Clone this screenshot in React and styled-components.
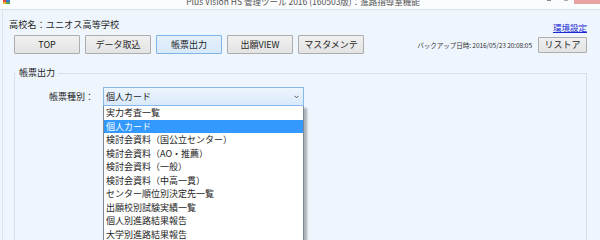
import styled, { createGlobalStyle } from 'styled-components';

const Global = createGlobalStyle`
  html, body {
    margin: 0;
    padding: 0;
    background: #eef5fd;
  }
  body {
    font-family: "Noto Sans CJK JP", "Noto Sans", sans-serif;
    font-size: 9px;
    color: #1e1e1e;
  }
`;

const Window = styled.div`
  width: 600px;
  height: 240px;
  overflow: hidden;
  background: #eef5fd;
  display: flex;
  flex-direction: column;
`;

const TitleBar = styled.div`
  height: 9px;
  flex-shrink: 0;
  background: #fbfcfd;
  border-bottom: 1px solid #d9e1ea;
  display: grid;
  grid-template-columns: 1fr auto 1fr;
  grid-template-rows: 9px;
  align-items: start;
  overflow: hidden;
`;

const AppIcon = styled.svg`
  margin-left: 3px;
`;

const Title = styled.div`
  font-size: 8.5px;
  line-height: 10px;
  color: #555;
  white-space: nowrap;
  margin-top: -4px;
  padding-left: 6px;
`;

const Controls = styled.div`
  justify-self: end;
  display: flex;
  align-items: flex-start;
  height: 9px;
  .min {
    width: 4px;
    height: 1px;
    background: #888;
    margin-right: 13px;
  }
  .max {
    width: 4px;
    height: 1px;
    background: #aaa;
    margin-right: 6px;
  }
  .close {
    width: 26px;
    height: 4px;
    background: #e7a3a3;
  }
`;

const Body = styled.div`
  flex: 1;
  display: flex;
  flex-direction: column;
  margin-left: 2px;
  border-left: 1px solid #dde5ec;
  padding: 0 13px 0 6px;
`;

const Header = styled.div`
  display: flex;
  justify-content: space-between;
  align-items: flex-end;
  height: 25px;
`;

const SchoolName = styled.div`
  line-height: 12px;
  margin-bottom: 5px;
  font-size: 9.2px;
`;

const SettingsLink = styled.a`
  line-height: 12px;
  margin-bottom: 2px;
  color: #1d2bd6;
  text-decoration: underline;
  font-size: 8.5px;
  cursor: pointer;
`;

const Toolbar = styled.div`
  display: flex;
  align-items: center;
  height: 19px;
  gap: 5px;
  padding-left: 5px;
`;

const Button = styled.button`
  width: ${p => p.$w || 66}px;
  height: ${p => p.$h || 19}px;
  padding: 0;
  font-family: inherit;
  font-size: 9px;
  color: #1e1e1e;
  border-radius: 1px;
  border: 1px solid ${p => (p.$active ? '#7eb4ea' : '#adadad')};
  background: ${p =>
    p.$active
      ? 'linear-gradient(#e4f0fc, #d8e9fb)'
      : 'linear-gradient(#f0f0f0, #e3e3e3)'};
`;

const Spacer = styled.div`
  flex: 1;
`;

const Backup = styled.div`
  font-size: 6.6px;
  color: #333;
  letter-spacing: -0.1px;
  margin-right: 1px;
`;

const Fieldset = styled.fieldset`
  margin: 13px 0 0 5px;
  padding: 0;
  border: 1px solid #d8dee5;
  height: 220px;
  min-width: 0;
`;

const Legend = styled.legend`
  margin-left: 1px;
  padding: 0 3px;
  line-height: 12px;
  font-size: 9px;
`;

const FormRow = styled.div`
  display: flex;
  align-items: center;
  padding: 8px 0 0 34px;
`;

const Label = styled.div`
  margin-right: 9px;
  font-size: 9px;
`;

const SelectWrap = styled.div`
  position: relative;
  width: 201px;
`;

const SelectBox = styled.div`
  box-sizing: border-box;
  height: 19px;
  border: 1px solid #86b9ea;
  background: linear-gradient(#edf5fd, #d9e9fa);
  display: flex;
  align-items: center;
  justify-content: space-between;
  padding: 0 4px 0 2px;
  font-size: 9px;
`;

const List = styled.ul`
  position: absolute;
  top: 100%;
  left: 0;
  width: 100%;
  box-sizing: border-box;
  margin: 0;
  padding: 0;
  list-style: none;
  background: #fff;
  border: 1px solid #7d8a96;
  border-top: none;
  box-shadow: 3px 2px 2px rgba(0, 0, 0, 0.28);
`;

const Item = styled.li`
  line-height: 13.5px;
  height: 13.5px;
  padding-left: 2px;
  font-size: 9px;
  white-space: nowrap;
  color: ${p => (p.$selected ? '#fff' : '#1e1e1e')};
  background: ${p => (p.$selected ? '#3399ff' : 'transparent')};
`;

const items = [
  '実力考査一覧',
  '個人カード',
  '検討会資料（国公立センター）',
  '検討会資料（AO・推薦）',
  '検討会資料（一般）',
  '検討会資料（中高一貫）',
  'センター順位別決定先一覧',
  '出願校別試験実績一覧',
  '個人別進路結果報告',
  '大学別進路結果報告',
];

const tabs = ['TOP', 'データ取込', '帳票出力', '出願VIEW', 'マスタメンテ'];

export default function App() {
  return (
    <>
      <Global />
      <Window>
        <TitleBar>
          <AppIcon width="7" height="4" viewBox="0 0 7 4">
            <rect x="0" y="0" width="3" height="2" fill="#e0443a" />
            <rect x="3" y="0" width="4" height="2" fill="#3b7bd8" />
            <rect x="0" y="2" width="3" height="2" fill="#f0b429" />
            <rect x="3" y="2" width="4" height="2" fill="#58a64a" />
          </AppIcon>
          <Title>Plus Vision HS 管理ツール 2016 (160503版)：進路指導室機能</Title>
          <Controls>
            <span className="min" />
            <span className="max" />
            <span className="close" />
          </Controls>
        </TitleBar>
        <Body>
          <Header>
            <SchoolName>高校名：ユニオス高等学校</SchoolName>
            <SettingsLink>環境設定</SettingsLink>
          </Header>
          <Toolbar>
            {tabs.map(t => (
              <Button key={t} $active={t === '帳票出力'}>
                {t}
              </Button>
            ))}
            <Spacer />
            <Backup>バックアップ日時: 2016/05/23 20:08:05</Backup>
            <Button $w={49} $h={16}>リストア</Button>
          </Toolbar>
          <Fieldset>
            <Legend>帳票出力</Legend>
            <FormRow>
              <Label>帳票種別：</Label>
              <SelectWrap>
                <SelectBox>
                  <span>個人カード</span>
                  <svg width="5" height="4" viewBox="0 0 5 4">
                    <path d="M0.5 0.8 L2.5 2.8 L4.5 0.8" fill="none" stroke="#555" strokeWidth="1" />
                  </svg>
                </SelectBox>
                <List>
                  {items.map(it => (
                    <Item key={it} $selected={it === '個人カード'}>
                      {it}
                    </Item>
                  ))}
                </List>
              </SelectWrap>
            </FormRow>
          </Fieldset>
        </Body>
      </Window>
    </>
  );
}
